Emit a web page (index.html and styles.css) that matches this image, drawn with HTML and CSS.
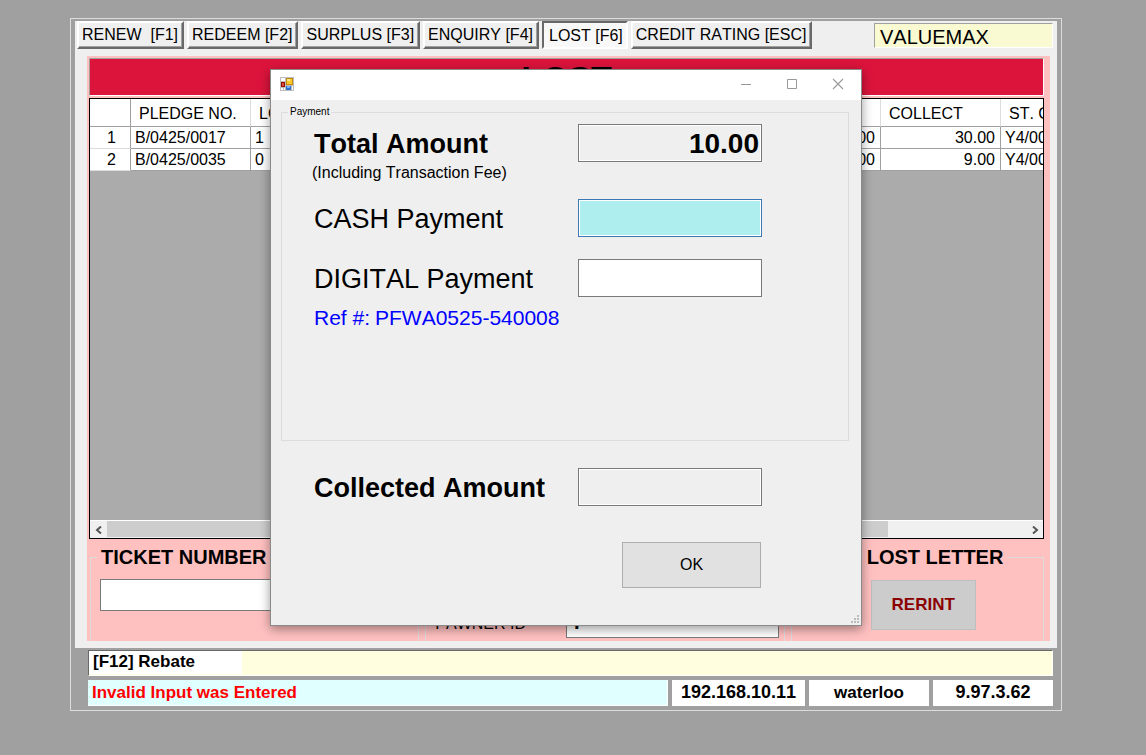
FILE: index.html
```html
<!DOCTYPE html>
<html lang="en">
<head>
<meta charset="utf-8">
<title>Lost Ticket - Payment</title>
<link rel="stylesheet" href="styles.css">
</head>
<body>
<div class="frame">
  <main class="panel">
    <nav class="toolbar">
      <button class="tab">RENEW&nbsp; [F1]</button>
      <button class="tab">REDEEM [F2]</button>
      <button class="tab">SURPLUS [F3]</button>
      <button class="tab">ENQUIRY [F4]</button>
      <button class="tab tab-active">LOST [F6]</button>
      <button class="tab">CREDIT RATING [ESC]</button>
      <div class="company">VALUEMAX</div>
    </nav>
    <section class="workspace">
      <h1 class="banner">LOST</h1>
      <div class="grid">
        <div class="grid-view">
          <table class="ledger">
            <colgroup><col class="col-index"><col class="col"><col class="col-wide"><col class="col"><col class="col"></colgroup>
            <thead>
              <tr><th></th><th>PLEDGE NO.</th><th>LOT</th><th>COLLECT</th><th>ST. CODE</th></tr>
            </thead>
            <tbody>
              <tr><td class="index">1</td><td>B/0425/0017</td><td><span class="split"><span>1</span><span>0.00</span></span></td><td class="amount">30.00</td><td>Y4/0001</td></tr>
              <tr><td class="index">2</td><td>B/0425/0035</td><td><span class="split"><span>0</span><span>0.00</span></span></td><td class="amount">9.00</td><td>Y4/0001</td></tr>
            </tbody>
          </table>
        </div>
        <div class="scrollbar">
          <button class="scroll-arrow" aria-label="Scroll left"><svg width="8" height="8" viewBox="0 0 8 8"><path d="M6 0.5 2 4l4 3.5" fill="none" stroke="#555" stroke-width="2"/></svg></button>
          <div class="scroll-track"><div class="scroll-thumb"></div></div>
          <button class="scroll-arrow" aria-label="Scroll right"><svg width="8" height="8" viewBox="0 0 8 8"><path d="M2 0.5 6 4 2 7.5" fill="none" stroke="#555" stroke-width="2"/></svg></button>
        </div>
      </div>
      <div class="groups">
        <fieldset class="group group-ticket">
          <legend>TICKET NUMBER</legend>
          <input class="field" type="text" aria-label="Ticket number">
        </fieldset>
        <fieldset class="group group-pawner">
          <label for="pawner">PAWNER ID</label>
          <input class="field pawner-id" id="pawner" type="text" value="F">
        </fieldset>
        <fieldset class="group group-letter">
          <legend>LOST LETTER</legend>
          <button class="reprint">RERINT</button>
        </fieldset>
      </div>
    </section>
  </main>
  <footer class="status">
    <div class="hint"><span class="hint-text">[F12] Rebate</span></div>
    <div class="status-row">
      <div class="message">Invalid Input was Entered</div>
      <div class="cell cell-ip">192.168.10.11</div>
      <div class="cell cell-host">waterloo</div>
      <div class="cell cell-version">9.97.3.62</div>
    </div>
  </footer>
  <div class="overlay">
    <div class="dialog" role="dialog" aria-label="Payment">
      <div class="titlebar">
        <svg class="app-icon" width="14" height="14" viewBox="0 0 14 14">
          <rect width="14" height="14" fill="#bdbdbd"/>
          <path d="M1 1h4v3H1zM1 11h2v2H1zM4 11h1v2H4zM12 9h1v4h-1z" fill="#fff"/>
          <rect x="6" y="1" width="7" height="7" fill="#c58a10"/><rect x="7" y="2" width="5" height="5" fill="#fcc92a"/><rect x="7" y="2" width="3" height="2" fill="#ffe58a"/>
          <rect x="1" y="5" width="4" height="5" fill="#8e1208"/><rect x="2" y="6" width="2" height="3" fill="#e2452f"/>
          <rect x="6" y="9" width="5" height="4" fill="#2f6fd0"/><rect x="7" y="9" width="3" height="2" fill="#79aef2"/>
        </svg>
        <div class="window-buttons">
          <button aria-label="Minimize"><svg width="12" height="12" viewBox="0 0 12 12"><path d="M1 6.5h10" stroke="#999"/></svg></button>
          <button aria-label="Maximize"><svg width="12" height="12" viewBox="0 0 12 12"><path d="M1.500 1.500h9v9h-9z" fill="none" stroke="#999"/></svg></button>
          <button aria-label="Close"><svg width="12" height="12" viewBox="0 0 12 12"><path d="M1 1l10 10M11 1 1 11" stroke="#999" stroke-width="1.100"/></svg></button>
        </div>
      </div>
      <div class="dialog-body">
        <fieldset class="payment">
          <legend>Payment</legend>
          <div class="row">
            <label class="strong" for="total">Total Amount</label>
            <input class="money money-total" id="total" type="text" value="10.00" readonly>
          </div>
          <p class="note">(Including Transaction Fee)</p>
          <div class="row row-cash">
            <label for="cash">CASH Payment</label>
            <input class="money money-focus" id="cash" type="text">
          </div>
          <div class="row row-digital">
            <label for="digital">DIGITAL Payment</label>
            <input class="money" id="digital" type="text">
          </div>
          <p class="ref"><span>Ref #:</span><span>PFWA0525-540008</span></p>
        </fieldset>
        <div class="row row-collected">
          <label class="strong" for="collected">Collected Amount</label>
          <input class="money money-total" id="collected" type="text" readonly>
        </div>
        <div class="actions"><button class="ok">OK</button></div>
        <svg class="grip" width="9" height="9" viewBox="0 0 9 9"><path d="M6 0h2v2H6zM3 3h2v2H3zM6 3h2v2H6zM0 6h2v2H0zM3 6h2v2H3zM6 6h2v2H6z" fill="#bbb"/></svg>
      </div>
    </div>
  </div>
</div>
</body>
</html>
```
FILE: styles.css
```css
* { box-sizing: border-box; }

body {
  margin: 0;
  padding: 18px 84px 0 70px;
  background: #a0a0a0;
  color: #000;
  font: 16px/20px "Liberation Sans", Arial, sans-serif;
  font-kerning: none;
}

button, input { font: inherit; font-kerning: none; color: inherit; border-radius: 0; margin: 0; }
fieldset { margin: 0; padding: 0; min-width: 0; }

.frame {
  position: relative;
  border: 1px solid #dcdcdc;
  padding: 2px 4px 4px;
}

.panel { background: #efefef; padding: 0 7px 7px 12px; }

/* Toolbar */
.toolbar {
  display: flex;
  align-items: flex-start;
  gap: 3px;
  margin: 0 -3px 0 -10px;
  padding-bottom: 7px;
}
.tab {
  height: 28px;
  padding: 0 4px 0 3px;
  border: 2px solid;
  border-color: #fff #696969 #696969 #fff;
  background: #efefef;
  line-height: 22px;
  white-space: nowrap;
  box-shadow: inset -1px -1px #a0a0a0;
}
.tab-active {
  border-color: #696969 #fff #fff #696969;
  background: #f8f8f8;
  padding: 2px 3px 0 5px;
  box-shadow: none;
}
.company {
  width: 179px;
  height: 25px;
  margin: 2px 0 0 auto;
  padding-left: 5px;
  border: 1px solid;
  border-color: #a0a0a0 #fff #fff #a0a0a0;
  background: #fafad2;
  font-size: 20px;
  line-height: 26px;
}

/* Workspace */
.workspace { background: #ffc0c0; padding: 2px 6px 0 2px; }
.banner {
  height: 38px;
  margin: 0 0 2px;
  border: 1px solid;
  border-color: #a0a0a0 #fff #fff #a0a0a0;
  background: #dc143c;
  font-size: 34px;
  line-height: 38px;
  text-align: center;
}
.grid { border: 1px solid #000; background: #ababab; }
.grid-view { height: 421px; overflow: hidden; }
.ledger {
  width: 1031px;
  table-layout: fixed;
  border-collapse: separate;
  border-spacing: 0;
  background: #fff;
}
.col-index { width: 41px; }
.col { width: 120px; }
.col-wide { width: 630px; }
.ledger th {
  height: 28px;
  padding: 2px 8px 0;
  border-right: 1px solid #dcdcdc;
  border-bottom: 1px solid #a0a0a0;
  font-weight: normal;
  text-align: left;
  white-space: nowrap;
}
.ledger th:first-child { border-right-color: #a0a0a0; }
.ledger td {
  height: 22px;
  padding: 1px 5px 0 4px;
  border-right: 1px solid #a0a0a0;
  border-bottom: 1px solid #a0a0a0;
  line-height: 20px;
}
.ledger .index { text-align: center; border-bottom-color: #dcdcdc; padding-left: 8px; }
.ledger .amount { text-align: right; }
.split { display: flex; justify-content: space-between; }

.scrollbar {
  display: flex;
  height: 18px;
  border-top: 1px solid #fff;
  background: #f0f0f0;
}
.scroll-arrow {
  display: grid;
  place-items: center;
  width: 17px;
  padding: 0;
  border: 0;
  background: #f0f0f0;
}
.scroll-track { flex: 1; }
.scroll-thumb { width: 85%; height: 16px; background: #cdcdcd; }

/* Group boxes */
.groups {
  display: grid;
  grid-template-columns: 329fr 359fr 253fr;
  gap: 6px;
  padding: 7px 0 0 1px;
}
.group { border: 1px solid #dcdcdc; border-bottom: 0; }
.group legend {
  padding: 0 4px;
  font-size: 20px;
  line-height: 22px;
  font-weight: bold;
}
.group-ticket { padding: 11px 9px 30px; }
.group-ticket legend { margin-left: -3px; }
.group-pawner {
  display: flex;
  align-items: flex-end;
  gap: 40px;
  margin-top: 10px;
  padding: 0 5px 3px 9px;
}
.group-pawner label { line-height: 28px; white-space: nowrap; }
.group-letter { padding: 12px 0 10px 79px; }
.group-letter legend { margin-left: -8px; }
.field {
  display: block;
  width: 100%;
  height: 32px;
  padding: 0 7px;
  border: 1px solid #7a7a7a;
  background: #fff;
}
.pawner-id { flex: 1; font-size: 20px; font-weight: bold; }
.reprint {
  display: block;
  width: 105px;
  height: 50px;
  padding: 0;
  border: 1px solid #bfbfbf;
  background: #ccc;
  color: #8b0000;
  font-size: 17px;
  font-weight: bold;
}

/* Status bars */
.status {
  margin: 2px 4px 0 13px;
  font-size: 17px;
  font-weight: bold;
}
.hint {
  height: 26px;
  border: 1px solid;
  border-color: #696969 #fff #fff #696969;
  background: #ffffe0;
}
.hint-text {
  display: block;
  width: 153px;
  height: 23px;
  padding-left: 4px;
  background: #fff;
  line-height: 22px;
}
.status-row {
  display: flex;
  gap: 4px;
  margin-top: 4px;
  line-height: 25px;
}
.message {
  flex: 1;
  height: 26px;
  padding-left: 4px;
  border-right: 1px solid #fff;
  border-bottom: 1px solid #fff;
  background: #e0ffff;
  color: #f00;
}
.cell { width: 120px; background: #fff; text-align: center; }
.cell-ip { width: 133px; }
.cell-ip, .cell-version { font-size: 18px; }

/* Payment dialog */
.overlay {
  position: absolute;
  inset: 50px 0 auto;
  display: flex;
  justify-content: center;
}
.dialog {
  width: 592px;
  border: 1px solid #8a8a8a;
  background: #efefef;
  box-shadow: 0 3px 10px rgba(0, 0, 0, 0.4);
}
.titlebar {
  display: flex;
  justify-content: space-between;
  align-items: center;
  height: 30px;
  padding: 0 0 2px 9px;
  background: #fff;
}
.window-buttons { display: flex; }
.window-buttons button {
  display: grid;
  place-items: center;
  width: 46px;
  height: 28px;
  padding: 0;
  border: 0;
  background: none;
}
.dialog-body { position: relative; padding: 6px 12px 37px 10px; }
.payment {
  border: 1px solid #dcdcdc;
  padding: 6px 0 109px;
}
.payment legend {
  margin-left: 6px;
  padding: 0 2px;
  font-size: 10px;
  line-height: 12px;
}
.row {
  display: flex;
  align-items: center;
  justify-content: space-between;
  padding: 0 86px 0 32px;
  font-size: 27px;
  line-height: 32px;
}
.row label { padding-top: 2px; }
.strong { font-weight: bold; }
.money {
  width: 184px;
  height: 38px;
  padding: 2px 2px 0;
  border: 1px solid #7a7a7a;
  background: #fff;
  font-size: 28px;
  font-weight: bold;
  text-align: right;
}
.money-total { background: #efefef; box-shadow: inset 0 0 0 1px #fff; }
.money-focus { background: #afeeee; border-color: #3b78b4; box-shadow: inset 0 0 0 1px #fff; }
.note { margin: 0; padding: 1px 0 0 30px; }
.row-cash { margin-top: 16px; }
.row-digital { margin-top: 22px; }
.ref {
  display: flex;
  gap: 5px;
  margin: 8px 0 0;
  padding-left: 32px;
  color: #00f;
  font-size: 21px;
  line-height: 26px;
}
.row-collected { margin-top: 27px; padding: 0 87px 0 33px; }
.actions { display: flex; justify-content: flex-end; margin-top: 36px; padding-right: 88px; }
.ok {
  width: 139px;
  height: 46px;
  padding: 0;
  border: 1px solid #adadad;
  background: #e1e1e1;
}
.grip { position: absolute; right: 1px; bottom: 1px; }
```
